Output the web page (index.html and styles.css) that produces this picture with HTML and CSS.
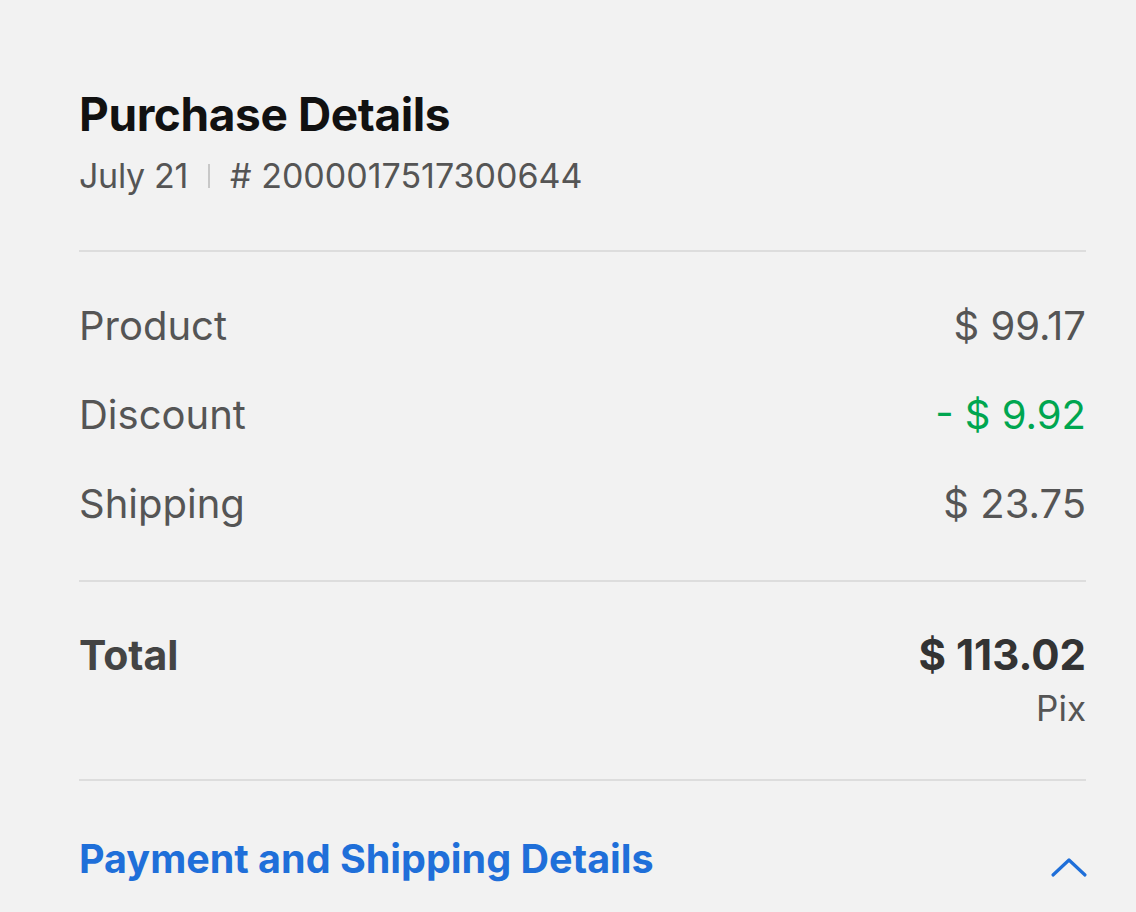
FILE: index.html
```html
<!DOCTYPE html>
<html lang="en">
<head>
<meta charset="utf-8">
<title>Purchase Details</title>
<link rel="stylesheet" href="styles.css">
</head>
<body>
<main class="page">
  <header class="head">
    <h1 class="title">Purchase Details</h1>
    <p class="meta"><span>July 21</span><span class="sep"></span><span># 2000017517300644</span></p>
  </header>
  <section class="rows">
    <div class="row"><span class="label">Product</span><span class="value">$ 99.17</span></div>
    <div class="row"><span class="label">Discount</span><span class="value green">- $ 9.92</span></div>
    <div class="row"><span class="label">Shipping</span><span class="value">$ 23.75</span></div>
  </section>
  <section class="total">
    <span class="total-label">Total</span>
    <div class="total-right">
      <span class="total-value">$ 113.02</span>
      <span class="method">Pix</span>
    </div>
  </section>
  <section class="more">
    <span class="more-link">Payment and Shipping Details</span>
    <svg class="chev" width="38" height="22" viewBox="0 0 38 22"><polyline points="3,19 19,4 35,19" fill="none" stroke="#1f6fd9" stroke-width="3.2" stroke-linecap="round" stroke-linejoin="round"/></svg>
  </section>
</main>
</body>
</html>
```
FILE: styles.css
```css
html, body {
  margin: 0;
  padding: 0;
  background: #f2f2f2;
}
body {
  font-family: "Inter", "Liberation Sans", sans-serif;
  color: #555;
}
.page {
  padding: 0 50px 0 79px;
}
.head {
  padding-top: 84px;
  padding-bottom: 49px;
  border-bottom: 2px solid #dddddd;
}
.title {
  margin: 0;
  font-size: 46px;
  line-height: 60px;
  font-weight: 700;
  color: #111;
  letter-spacing: -0.4px;
}
.meta {
  margin: 7px 0 0;
  font-size: 34px;
  line-height: 50px;
  color: #555;
  display: flex;
  align-items: center;
  gap: 20px;
}
.meta span:first-child {
  letter-spacing: -0.3px;
}
.sep {
  width: 2px;
  height: 24px;
  background: #c8c8c8;
}
.rows {
  padding: 29px 0 32px;
  border-bottom: 2px solid #dddddd;
}
.row {
  display: flex;
  justify-content: space-between;
  font-size: 40px;
  line-height: 89px;
}
.green { color: #00a650; }
.total {
  display: flex;
  justify-content: space-between;
  align-items: flex-start;
  padding: 48px 0 46px;
  border-bottom: 2px solid #dddddd;
}
.total-label {
  font-size: 41px;
  line-height: 50px;
  font-weight: 700;
  color: #444;
}
.total-right {
  display: flex;
  flex-direction: column;
  align-items: flex-end;
}
.total-value {
  font-size: 42px;
  line-height: 50px;
  font-weight: 700;
  color: #333;
}
.method {
  margin-top: 3px;
  font-size: 35px;
  line-height: 50px;
  color: #555;
}
.more {
  display: flex;
  justify-content: space-between;
  align-items: center;
  padding-top: 53px;
}
.more-link {
  font-size: 39.5px;
  line-height: 50px;
  font-weight: 700;
  color: #1f6fd9;
}
.chev {
  margin-right: -2px;
  margin-top: 16px;
}
```
